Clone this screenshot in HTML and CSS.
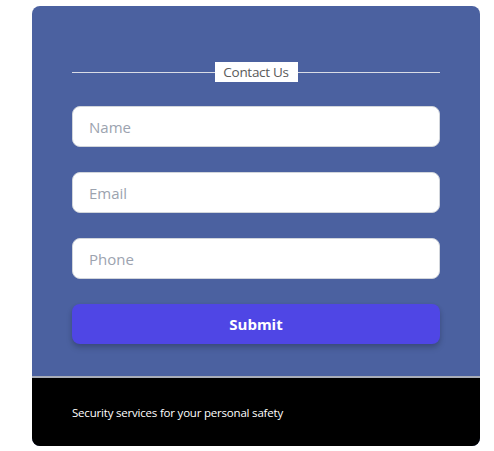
FILE: index.html
```html
<!DOCTYPE html>
<html>
<head>
<meta charset="utf-8">
<link rel="stylesheet" href="styles.css">
</head>
<body>
<div class="card">
  <form class="form">
    <div class="legend">
      <span class="rule"></span>
      <span class="legend-text">Contact Us</span>
      <span class="rule"></span>
    </div>
    <input class="field" type="text" placeholder="Name">
    <input class="field" type="email" placeholder="Email">
    <input class="field" type="tel" placeholder="Phone">
    <button class="submit" type="button">Submit</button>
  </form>
  <footer class="footer">
    <p class="footer-text">Security services for your personal safety</p>
  </footer>
</div>
</body>
</html>
```

FILE: styles.css
```css
* { box-sizing: border-box; }
body {
  margin: 0;
  padding: 6px 14px 0 32px;
  background: #ffffff;
  font-family: "Open Sans", "Noto Sans", sans-serif;
}
.card {
  width: 448px;
  height: 440px;
  border-radius: 8px;
  overflow: hidden;
  background: #4b61a0;
  display: flex;
  flex-direction: column;
}
.form {
  flex: 1;
  padding: 56px 40px 0 40px;
  display: flex;
  flex-direction: column;
}
.legend {
  display: flex;
  align-items: center;
  height: 20px;
  margin-bottom: 24px;
}
.rule {
  flex: 1;
  height: 1px;
  background: #d9dce6;
}
.legend-text {
  background: #ffffff;
  color: #5a5a5a;
  font-size: 13.5px;
  line-height: 20px;
  padding: 0 6px;
  width: 83px;
  text-align: center;
  white-space: nowrap;
  letter-spacing: -0.3px;
}
.field {
  height: 41px;
  margin-bottom: 25px;
  border: 1px solid #d1d5db;
  border-radius: 8px;
  background: #ffffff;
  padding: 0 16px;
  font-family: inherit;
  font-size: 15px;
  color: #374151;
  outline: none;
}
.field::placeholder {
  color: #9ca3af;
}
.submit {
  height: 40px;
  border: none;
  border-radius: 8px;
  background: #4f46e5;
  color: #ffffff;
  font-family: inherit;
  font-weight: 700;
  font-size: 15px;
  box-shadow: 0 4px 6px rgba(0,0,0,0.15), 0 2px 4px rgba(0,0,0,0.1);
}
.footer {
  height: 70px;
  border-top: 2px solid #a9adb8;
  background: #000000;
  padding: 0 40px;
  display: flex;
  align-items: center;
}
.footer-text {
  margin: 0;
  color: #ffffff;
  font-size: 11.5px;
  letter-spacing: -0.2px;
}
```
